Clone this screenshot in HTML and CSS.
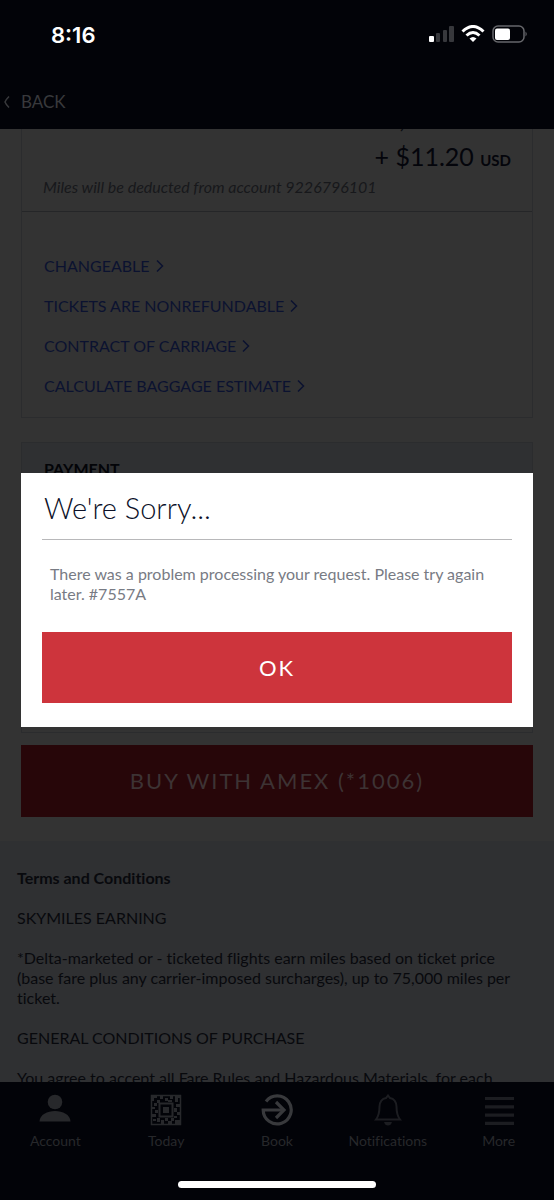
FILE: index.html
```html
<!DOCTYPE html>
<html lang="en">
<head>
<meta charset="utf-8">
<meta name="viewport" content="width=device-width, initial-scale=1">
<title>Review and Pay</title>
<link rel="stylesheet" href="styles.css">
</head>
<body>
<div class="app">
  <header class="top">
    <div class="status">
      <span class="time">8:16</span>
      <svg class="status-icons" width="100" height="20" viewBox="0 0 100 20" aria-hidden="true">
        <rect x="1" y="11" width="5" height="6" rx="1" fill="#fff"/>
        <g fill="#37383c">
          <rect x="8" y="8" width="4" height="9" rx="1"/>
          <rect x="15" y="5" width="4" height="12" rx="1"/>
          <rect x="21" y="1" width="5" height="16" rx="1"/>
        </g>
        <g fill="none" stroke="#fff" stroke-width="3">
          <path d="M34.500 6.500Q45-3.500 55.500 6.500"/>
          <path d="M38.500 10.500Q45 4.500 51.500 10.500"/>
        </g>
        <path d="M41.500 13.500Q45 10.500 48.500 13.500L45 17Z" fill="#fff"/>
        <rect x="65" y="1" width="31" height="16" rx="5" fill="none" stroke="#66676b" stroke-width="1.500"/>
        <rect x="67" y="3.500" width="15" height="11.500" rx="2" fill="#fff"/>
        <path d="M97.500 6.500Q100 9 97.500 11.500Z" fill="#66676b"/>
      </svg>
    </div>
    <a class="back" href="#">
      <svg width="6" height="12" viewBox="0 0 6 12" aria-hidden="true"><path d="M5 .5Q2 3.500 1 6Q2 8.500 5 11.500" fill="none" stroke="currentColor" stroke-width="1.500"/></svg>
      BACK
    </a>
  </header>

  <main class="content">
    <section class="card fare">
      <div class="fare-total">
        <p class="miles">,</p>
        <p class="price">+ $11.20 <span class="currency">USD</span></p>
        <p class="note">Miles will be deducted from account 9226796101</p>
      </div>
      <nav class="links" aria-label="Fare details">
        <a href="#">CHANGEABLE <svg class="chev" viewBox="0 0 8 14" aria-hidden="true"><path d="M1 1.500L6.500 7L1 12.500"/></svg></a>
        <a href="#">TICKETS ARE NONREFUNDABLE <svg class="chev" viewBox="0 0 8 14" aria-hidden="true"><path d="M1 1.500L6.500 7L1 12.500"/></svg></a>
        <a href="#">CONTRACT OF CARRIAGE <svg class="chev" viewBox="0 0 8 14" aria-hidden="true"><path d="M1 1.500L6.500 7L1 12.500"/></svg></a>
        <a href="#">CALCULATE BAGGAGE ESTIMATE <svg class="chev" viewBox="0 0 8 14" aria-hidden="true"><path d="M1 1.500L6.500 7L1 12.500"/></svg></a>
      </nav>
    </section>
    <section class="card payment">
      <h2>PAYMENT</h2>
    </section>
    <button class="buy" type="button">BUY WITH AMEX (*1006)</button>
    <section class="terms">
      <h3>Terms and Conditions</h3>
      <p>SKYMILES EARNING</p>
      <p>*Delta-marketed or - ticketed flights earn miles based on ticket price (base fare plus any carrier-imposed surcharges), up to 75,000 miles per ticket.</p>
      <p>GENERAL CONDITIONS OF PURCHASE</p>
      <p>You agree to accept all Fare Rules and Hazardous Materials, for each</p>
    </section>
  </main>

  <footer class="bottom">
    <nav class="tabs" aria-label="Main">
      <a href="#">
        <svg viewBox="0 0 32 32" aria-hidden="true"><circle cx="16" cy="8" r="7.300" fill="currentColor"/><path d="M.5 27.500C1 13.500 31 13.500 31.500 27.500Z" fill="currentColor"/></svg>
        Account
      </a>
      <a href="#">
        <svg viewBox="0 0 32 32" aria-hidden="true">
          <g fill="none" stroke="currentColor" stroke-width="1.500"><path d="M1.500 1.500H30.500V30.500H1.500Z"/><path d="M9.500 9.500H22.500V22.500H9.500Z" stroke-width="2"/></g>
          <path fill="currentColor" d="M13 13h6v6h-6zM2 2h5v2H4v3H2zM10 2h3v3h-3zM15 4h3v3h-3zM20 2h3v3h-3zM25 2h5v2h-2v4h-3zM4 9h3v3H4zM2 13h3v2H2zM5 16h3v3H5zM2 20h4v3H2zM26 10h4v3h-4zM24 14h3v4h-3zM27 18h3v3h-3zM24 22h3v2h-3zM7 6h3v3H7zM18 6h4v2h-4zM3 25h3v2H3zM7 24h3v4H7zM11 26h3v4h-3zM15 24h3v3h-3zM18 27h4v3h-4zM21 24h3v3h-3zM25 26h5v4h-5z"/>
        </svg>
        Today
      </a>
      <a class="active" href="#">
        <svg viewBox="0 0 32 32" aria-hidden="true"><g fill="none" stroke="currentColor" stroke-width="3.200"><path d="M5 7.500A14 14 0 1 1 2.200 16H22"/><path d="M15 8L23 16L15 24"/></g></svg>
        Book
      </a>
      <a class="dim" href="#">
        <svg viewBox="0 0 32 32" aria-hidden="true"><path d="M4 25.500Q7.500 21 7.500 12.500Q8 5 14 4L16 1.500L18 4Q24 5 24.500 12.500Q24.500 21 28 25.500Z" fill="none" stroke="currentColor" stroke-width="2"/><path d="M12 28H20Q19 31.500 16 31.500Q13 31.500 12 28Z" fill="currentColor"/></svg>
        Notifications
      </a>
      <a class="dim" href="#">
        <svg viewBox="0 0 32 32" aria-hidden="true"><path d="M2 4.500H31M2 12.800H31M2 21.100H31M2 29.400H31" stroke="currentColor" stroke-width="3.200"/></svg>
        More
      </a>
    </nav>
    <div class="home-bar"></div>
  </footer>
</div>

<div class="overlay">
  <div class="dialog" role="alertdialog" aria-modal="true" aria-labelledby="dialog-title" aria-describedby="dialog-text">
    <h1 id="dialog-title">We're Sorry...</h1>
    <p id="dialog-text">There was a problem processing your request. Please try again later. #7557A</p>
    <button type="button">OK</button>
  </div>
</div>
</body>
</html>
```
FILE: styles.css
```css
* { box-sizing: border-box; }
body, h1, h2, h3, p { margin: 0; }
body {
  background: #333;
  color: #08090d;
  font-family: Lato, "Open Sans", sans-serif;
  font-size: 16px;
  line-height: 20px;
  font-variant-ligatures: none;
}
a { color: inherit; text-decoration: none; }
button { border: 0; border-radius: 0; font-family: inherit; cursor: pointer; }

.app { display: flex; flex-direction: column; height: 100vh; }

.top { background: #020308; padding: 22px 26px 17px 4px; }
.status { display: flex; justify-content: space-between; align-items: center; padding-left: 47px; color: #fff; }
.time { font: 600 22px/26px Inter, sans-serif; }
.back { display: inline-flex; align-items: center; gap: 11px; margin-top: 44px; color: #38393c; font-size: 17px; }

.content { flex: 1; min-height: 0; overflow: hidden; }
.card { margin: 0 21px; border: 1px solid #2b2c2e; }
.fare { border-top: 0; }
.fare-total { padding: 0 21px 14px; border-bottom: 1px solid #252628; }
.miles { margin-top: -27px; padding-right: 106px; text-align: right; font-size: 25px; line-height: 32px; }
.price { margin-top: 6px; text-align: right; font-size: 25px; line-height: 32px; color: #04050b; }
.currency { font-size: 15px; font-weight: 700; }
.note { margin-top: 1px; color: #17181b; font-style: italic; }
.links { display: flex; flex-direction: column; align-items: flex-start; gap: 20px; padding: 44px 22px 21px; color: #0b1230; }
.links a { display: flex; align-items: center; gap: 6px; }
.chev { width: 8px; height: 14px; fill: none; stroke: currentColor; stroke-width: 1.500px; }
.payment { margin-top: 24px; min-height: 291px; padding: 16px 22px; background: linear-gradient(#2f3032 60px, #333 60px); }
.payment h2 { font-size: 16px; line-height: 20px; color: #030408; }
.buy { display: block; width: calc(100% - 42px); margin: 12px 21px 24px; padding: 21px 0; background: #270609; color: #3d3334; font-size: 22px; line-height: 30px; letter-spacing: 2px; }
.terms { display: flex; flex-direction: column; gap: 20px; min-height: 260px; padding: 27px 24px 27px 17px; background: #2f3032; }
.terms h3 { font-size: 16px; line-height: 20px; }

.bottom { background: #020308; padding: 12px 0; }
.tabs { display: grid; grid-template-columns: repeat(5, 1fr); }
.tabs a { display: flex; flex-direction: column; align-items: center; gap: 5px; color: #27282b; font-size: 14px; }
.tabs .active svg { color: #38393c; }
.tabs .dim svg { color: #1c1d21; }
.tabs svg { width: 32px; height: 32px; }
.home-bar { width: 198px; height: 7px; margin: 30px auto 0; border-radius: 4px; background: #fff; }

.overlay { position: fixed; inset: 0; display: grid; align-items: center; padding: 0 21px; }
.dialog { padding: 17px 21px 24px; background: #fff; color: #787b84; }
.dialog h1 { padding: 0 2px 13px; border-bottom: 1px solid #b8b8ba; color: #0b1028; font-size: 29px; font-weight: 300; line-height: 36px; }
.dialog p { padding: 24px 7px 28px 8px; }
.dialog button { display: block; width: 100%; padding: 20px 0; background: #cd343c; color: #fff; font-size: 22px; line-height: 31px; letter-spacing: 2px; }
```
